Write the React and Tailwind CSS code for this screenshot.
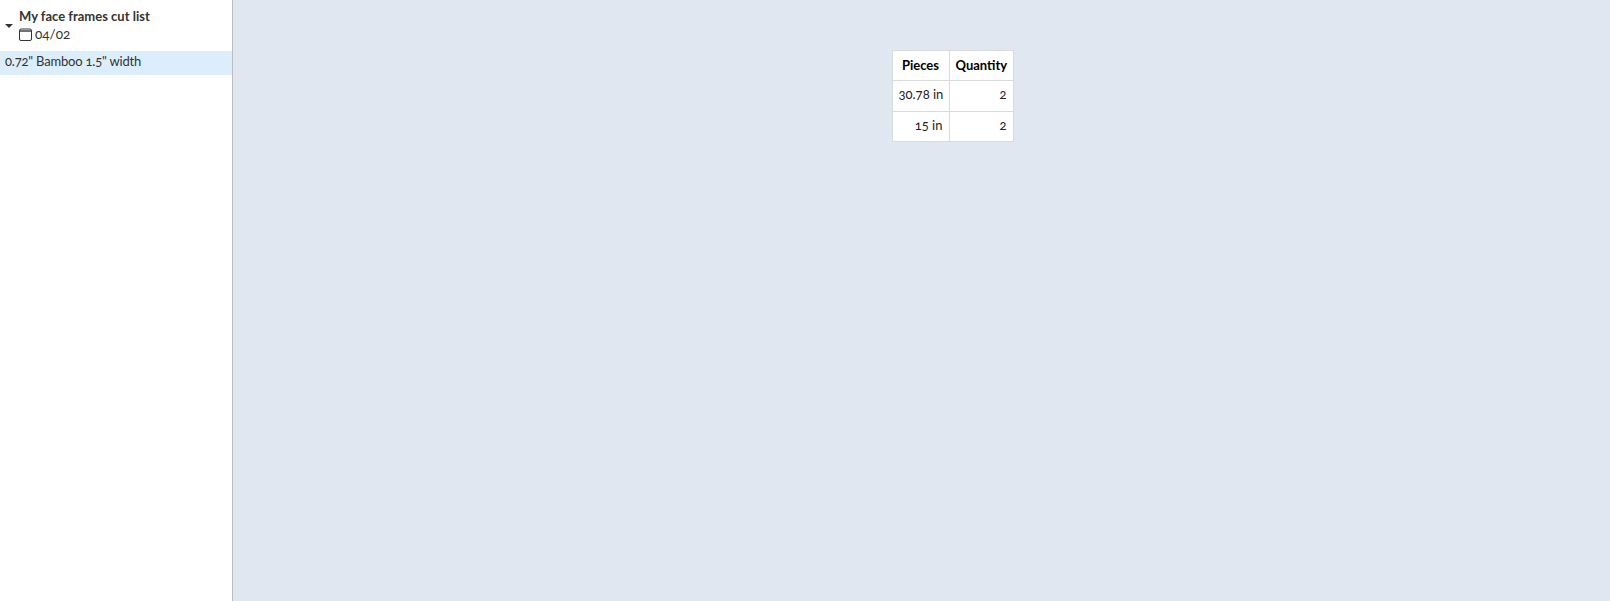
const ROWS = [
  { pieces: '30.78 in', quantity: '2', height: 'h-[31px]' },
  { pieces: '15 in', quantity: '2', height: 'h-[30px]' },
];

function CalendarIcon() {
  return (
    <svg width="13" height="13" viewBox="0 0 13 13" fill="none" stroke="#333" className="shrink-0">
      <rect x="0.5" y="1" width="12" height="11.5" rx="1.5" />
      <path d="M0.5 3h12" strokeWidth="1.4" />
    </svg>
  );
}

export default function App() {
  return (
    <div className="flex h-[601px] w-[1610px] oldstyle-nums font-['Lato',sans-serif] text-[13px] text-[#333]">
      {/* Sidebar */}
      <div className="w-[233px] shrink-0 border-r border-[#b9bdc4] bg-white">
        <div className="flex h-[51px] items-center pl-[5px]">
          <div className="mt-[1px] h-0 w-0 border-x-[4px] border-t-[4px] border-x-transparent border-t-[#333]" />
          <div className="ml-[6px] mt-[-1px]">
            <div className="leading-[18px] font-bold">My face frames cut list</div>
            <div className="flex items-center gap-[2px] text-[13.5px] leading-[18px]">
              <CalendarIcon />
              <span className="ml-[1px]">04/02</span>
            </div>
          </div>
        </div>
        <div className="flex h-[24px] items-center bg-[#dceefb] pl-[5px] pb-[3px] tracking-[-0.2px]">0.72" Bamboo 1.5" width</div>
      </div>

      {/* Main */}
      <div className="flex flex-1 justify-center bg-[#e0e7f1] pl-[62px] pt-[50px]">
        <table className="h-fit w-[121px] table-fixed border-collapse bg-white text-black">
          <thead>
            <tr className="h-[30px]">
              <th className="w-[57px] border border-[#d8dade] px-[6px] font-bold">Pieces</th>
              <th className="w-[64px] border border-[#d8dade] px-[6px] font-bold">Quantity</th>
            </tr>
          </thead>
          <tbody>
            {ROWS.map((row) => (
              <tr key={row.pieces} className={`${row.height} text-[#222]`}>
                <td className="whitespace-nowrap border border-[#d8dade] px-[6px] pb-[2px] text-right">{row.pieces}</td>
                <td className="border border-[#d8dade] px-[6px] pb-[2px] text-right">{row.quantity}</td>
              </tr>
            ))}
          </tbody>
        </table>
      </div>
    </div>
  );
}
